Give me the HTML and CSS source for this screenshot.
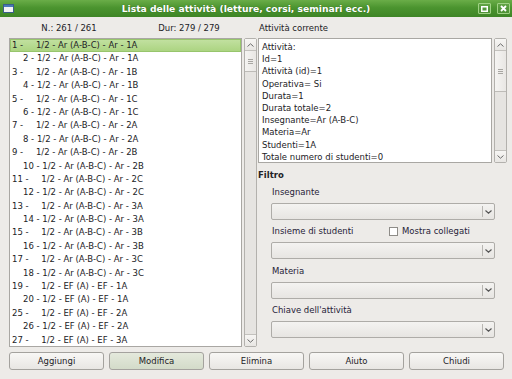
FILE: index.html
```html
<!DOCTYPE html>
<html lang="it">
<head>
    <meta charset="UTF-8">
    <title>Lista delle attività</title>
    <link rel="stylesheet" href="styles.css">
</head>
<body>
<div class="window">
    <!-- Title bar -->
    <div class="titlebar">
        <svg class="app-icon" width="11" height="9" viewBox="0 0 11 9">
            <rect x="0.5" y="0.5" width="10" height="8" fill="#f4f4f4" stroke="#3a5f8a"/>
            <rect x="1" y="1" width="9" height="2" fill="#4a78b8"/>
        </svg>
        <div class="title">Lista delle attività (letture, corsi, seminari ecc.)</div>
        <div class="wbtns">
            <span class="wbtn">
                <svg width="7" height="6" viewBox="0 0 7 6"><rect x="0.75" y="0.75" width="5.5" height="4.5" fill="none" stroke="#fff" stroke-width="1.5"/></svg>
            </span>
            <span class="wbtn">
                <svg width="7" height="7" viewBox="0 0 7 7"><path d="M1 1 L6 6 M6 1 L1 6" stroke="#fff" stroke-width="1.8"/></svg>
            </span>
        </div>
    </div>

    <div class="content">
        <div class="main">
            <!-- Left column: activity list -->
            <div class="left">
                <div class="counts">
                    <span>N.: 261 / 261</span>
                    <span>Dur: 279 / 279</span>
                </div>
                <div class="boxrow">
                    <div class="list">
                        <div class="row sel"><span class="id">1 - </span><span class="gap"></span>1/2 - Ar (A-B-C) - Ar - 1A</div>
                        <div class="row sub">2 - 1/2 - Ar (A-B-C) - Ar - 1A</div>
                        <div class="row"><span class="id">3 - </span><span class="gap"></span>1/2 - Ar (A-B-C) - Ar - 1B</div>
                        <div class="row sub">4 - 1/2 - Ar (A-B-C) - Ar - 1B</div>
                        <div class="row"><span class="id">5 - </span><span class="gap"></span>1/2 - Ar (A-B-C) - Ar - 1C</div>
                        <div class="row sub">6 - 1/2 - Ar (A-B-C) - Ar - 1C</div>
                        <div class="row"><span class="id">7 - </span><span class="gap"></span>1/2 - Ar (A-B-C) - Ar - 2A</div>
                        <div class="row sub">8 - 1/2 - Ar (A-B-C) - Ar - 2A</div>
                        <div class="row"><span class="id">9 - </span><span class="gap"></span>1/2 - Ar (A-B-C) - Ar - 2B</div>
                        <div class="row sub">10 - 1/2 - Ar (A-B-C) - Ar - 2B</div>
                        <div class="row"><span class="id">11 - </span><span class="gap"></span>1/2 - Ar (A-B-C) - Ar - 2C</div>
                        <div class="row sub">12 - 1/2 - Ar (A-B-C) - Ar - 2C</div>
                        <div class="row"><span class="id">13 - </span><span class="gap"></span>1/2 - Ar (A-B-C) - Ar - 3A</div>
                        <div class="row sub">14 - 1/2 - Ar (A-B-C) - Ar - 3A</div>
                        <div class="row"><span class="id">15 - </span><span class="gap"></span>1/2 - Ar (A-B-C) - Ar - 3B</div>
                        <div class="row sub">16 - 1/2 - Ar (A-B-C) - Ar - 3B</div>
                        <div class="row"><span class="id">17 - </span><span class="gap"></span>1/2 - Ar (A-B-C) - Ar - 3C</div>
                        <div class="row sub">18 - 1/2 - Ar (A-B-C) - Ar - 3C</div>
                        <div class="row"><span class="id">19 - </span><span class="gap"></span>1/2 - EF (A) - EF - 1A</div>
                        <div class="row sub">20 - 1/2 - EF (A) - EF - 1A</div>
                        <div class="row"><span class="id">25 - </span><span class="gap"></span>1/2 - EF (A) - EF - 2A</div>
                        <div class="row sub">26 - 1/2 - EF (A) - EF - 2A</div>
                        <div class="row"><span class="id">27 - </span><span class="gap"></span>1/2 - EF (A) - EF - 3A</div>
                    </div>
                    <div class="scrollbar">
                        <span class="arrow"><svg width="7" height="4" viewBox="0 0 7 4"><path d="M0.5 3.5 L3.5 0.8 L6.5 3.5" fill="none" stroke="#6a6a6a"/></svg></span>
                        <span class="thumb thumb-list"><span class="grip"></span></span>
                        <span class="track"></span>
                        <span class="arrow"><svg width="7" height="4" viewBox="0 0 7 4"><path d="M0.5 0.5 L3.5 3.2 L6.5 0.5" fill="none" stroke="#6a6a6a"/></svg></span>
                    </div>
                </div>
            </div>

            <!-- Right column: current activity and filter -->
            <div class="right">
                <div class="caption">Attività corrente</div>
                <div class="boxrow">
                    <div class="details">
                        <div>Attività:</div>
                        <div>Id=1</div>
                        <div>Attività (id)=1</div>
                        <div>Operativa= Si</div>
                        <div>Durata=1</div>
                        <div>Durata totale=2</div>
                        <div>Insegnante=Ar (A-B-C)</div>
                        <div>Materia=Ar</div>
                        <div>Studenti=1A</div>
                        <div>Totale numero di studenti=0</div>
                    </div>
                    <div class="scrollbar">
                        <span class="arrow"><svg width="7" height="4" viewBox="0 0 7 4"><path d="M0.5 3.5 L3.5 0.8 L6.5 3.5" fill="none" stroke="#6a6a6a"/></svg></span>
                        <span class="thumb thumb-details"><span class="grip"></span></span>
                        <span class="track"></span>
                        <span class="arrow"><svg width="7" height="4" viewBox="0 0 7 4"><path d="M0.5 0.5 L3.5 3.2 L6.5 0.5" fill="none" stroke="#6a6a6a"/></svg></span>
                    </div>
                </div>

                <div class="filter-title">Filtro</div>
                <div class="filter">
                    <div class="field-label">Insegnante</div>
                    <div class="combo"><span class="combo-arrow"><svg width="7" height="4" viewBox="0 0 7 4"><path d="M0.5 0.5 L3.5 3.2 L6.5 0.5" fill="none" stroke="#555" stroke-width="1.2"/></svg></span></div>

                    <div class="field-label with-check">
                        <span class="label-fixed">Insieme di studenti</span>
                        <span class="checkbox"></span>
                        <span>Mostra collegati</span>
                    </div>
                    <div class="combo"><span class="combo-arrow"><svg width="7" height="4" viewBox="0 0 7 4"><path d="M0.5 0.5 L3.5 3.2 L6.5 0.5" fill="none" stroke="#555" stroke-width="1.2"/></svg></span></div>

                    <div class="field-label">Materia</div>
                    <div class="combo"><span class="combo-arrow"><svg width="7" height="4" viewBox="0 0 7 4"><path d="M0.5 0.5 L3.5 3.2 L6.5 0.5" fill="none" stroke="#555" stroke-width="1.2"/></svg></span></div>

                    <div class="field-label">Chiave dell'attività</div>
                    <div class="combo"><span class="combo-arrow"><svg width="7" height="4" viewBox="0 0 7 4"><path d="M0.5 0.5 L3.5 3.2 L6.5 0.5" fill="none" stroke="#555" stroke-width="1.2"/></svg></span></div>
                </div>
            </div>
        </div>

        <!-- Bottom buttons -->
        <div class="buttons">
            <button>Aggiungi</button>
            <button class="default">Modifica</button>
            <button>Elimina</button>
            <button>Aiuto</button>
            <button>Chiudi</button>
        </div>
    </div>
</div>
</body>
</html>
```

FILE: styles.css
```css
/* Page and window */
html, body {
    margin: 0;
    padding: 0;
}

body {
    width: 512px;
    height: 379px;
    overflow: hidden;
    background: #edebe8;
    font-family: "DejaVu Sans", sans-serif;
    font-size: 8.5px;
    color: #222226;
}

.window {
    height: 379px;
}

/* Title bar */
.titlebar {
    height: 17px;
    display: flex;
    align-items: center;
    padding: 0 2px 0 3px;
    background: linear-gradient(#6aad48, #4b942f 45%, #3e8526);
    box-sizing: border-box;
}

.app-icon {
    flex: none;
    margin-top: -1px;
}

.title {
    flex: 1;
    text-align: center;
    color: #ffffff;
    font-weight: bold;
    font-size: 9.2px;
    text-shadow: 0 0 1px #2d5e1a;
}

.wbtns {
    display: flex;
    gap: 6px;
}

.wbtn {
    width: 13px;
    height: 11px;
    box-sizing: border-box;
    border: 1px solid #9fd184;
    border-radius: 1px;
    display: flex;
    align-items: center;
    justify-content: center;
    background: rgba(255, 255, 255, 0.06);
}

/* Content */
.content {
    padding: 5px 0 0 9px;
}

.main {
    display: grid;
    grid-template-columns: 248px 249px;
    column-gap: 1px;
}

.counts {
    display: grid;
    grid-template-columns: 120px 120px;
    height: 12px;
    line-height: 12px;
    text-align: center;
    margin-bottom: 4px;
}

.caption {
    height: 12px;
    line-height: 12px;
    margin-bottom: 4px;
    padding-left: 1px;
}

.boxrow {
    display: flex;
    gap: 2px;
}

/* Activity list */
.list {
    width: 234px;
    height: 309px;
    box-sizing: border-box;
    border: 1px solid #a9a7a3;
    background: #ffffff;
    overflow: hidden;
}

.row {
    height: 13.4px;
    line-height: 13.4px;
    padding-left: 2px;
    white-space: nowrap;
    box-sizing: border-box;
}

.row.sub {
    padding-left: 13px;
}

.row .gap {
    display: inline-block;
    width: 10px;
}

.row.sel {
    background: linear-gradient(#c3e1a2, #aad37f);
    box-shadow: inset 0 0 0 1px #97c56c;
}

/* Scroll bars */
.scrollbar {
    width: 13px;
    box-sizing: border-box;
    border: 1px solid #b3b1ad;
    border-radius: 2px;
    background: #e6e4e1;
    display: flex;
    flex-direction: column;
}

.arrow {
    height: 11px;
    flex: none;
    display: flex;
    align-items: center;
    justify-content: center;
    background: linear-gradient(#f7f6f4, #e8e6e3);
}

.arrow:first-child {
    border-bottom: 1px solid #c3c1bd;
}

.arrow:last-child {
    border-top: 1px solid #c3c1bd;
}

.thumb {
    flex: none;
    display: flex;
    align-items: center;
    justify-content: center;
    background: linear-gradient(90deg, #f5f4f2, #e9e7e4);
    border-bottom: 1px solid #bdbbb7;
}

.thumb-list {
    height: 20px;
}

.thumb-details {
    height: 40px;
}

.grip {
    width: 5px;
    height: 5px;
    background: repeating-linear-gradient(#a8a6a2 0 1px, transparent 1px 2px);
}

.track {
    flex: 1;
}

/* Current activity details */
.details {
    width: 234px;
    height: 125px;
    box-sizing: border-box;
    border: 1px solid #a9a7a3;
    background: #ffffff;
    padding: 2px 3px 0;
    line-height: 12.2px;
    overflow: hidden;
    white-space: nowrap;
}

/* Filter */
.filter-title {
    font-weight: bold;
    height: 12px;
    line-height: 12px;
    margin-top: 6px;
}

.filter {
    display: flex;
    flex-direction: column;
    padding: 4px 0 0 13px;
}

.field-label {
    height: 14px;
    line-height: 14px;
    padding-left: 1px;
    margin-bottom: 4px;
    color: #262238;
}

.with-check {
    display: flex;
    align-items: center;
}

.label-fixed {
    width: 117px;
}

.checkbox {
    width: 9px;
    height: 9px;
    box-sizing: border-box;
    border: 1px solid #8e8c88;
    background: #ffffff;
    margin-right: 4px;
}

.combo {
    width: 224px;
    height: 17px;
    box-sizing: border-box;
    border: 1px solid #aeaca8;
    border-radius: 2px;
    background: linear-gradient(#f4f3f1, #e7e5e2);
    display: flex;
    justify-content: flex-end;
    align-items: center;
    margin-bottom: 4.4px;
}

.combo-arrow {
    width: 11px;
    height: 11px;
    border-left: 1px solid #b8b6b2;
    display: flex;
    align-items: center;
    justify-content: center;
}

/* Bottom buttons */
.buttons {
    display: flex;
    gap: 5px;
    margin-top: 5px;
}

button {
    width: 95px;
    height: 18px;
    padding: 0;
    font-family: "DejaVu Sans", sans-serif;
    font-size: 8.5px;
    color: #222226;
    border: 1px solid #a4a29e;
    border-radius: 3px;
    background: linear-gradient(#f8f7f5, #e8e6e3);
}

button.default {
    background: linear-gradient(#e4e9dc, #d3dbc9);
}
```
